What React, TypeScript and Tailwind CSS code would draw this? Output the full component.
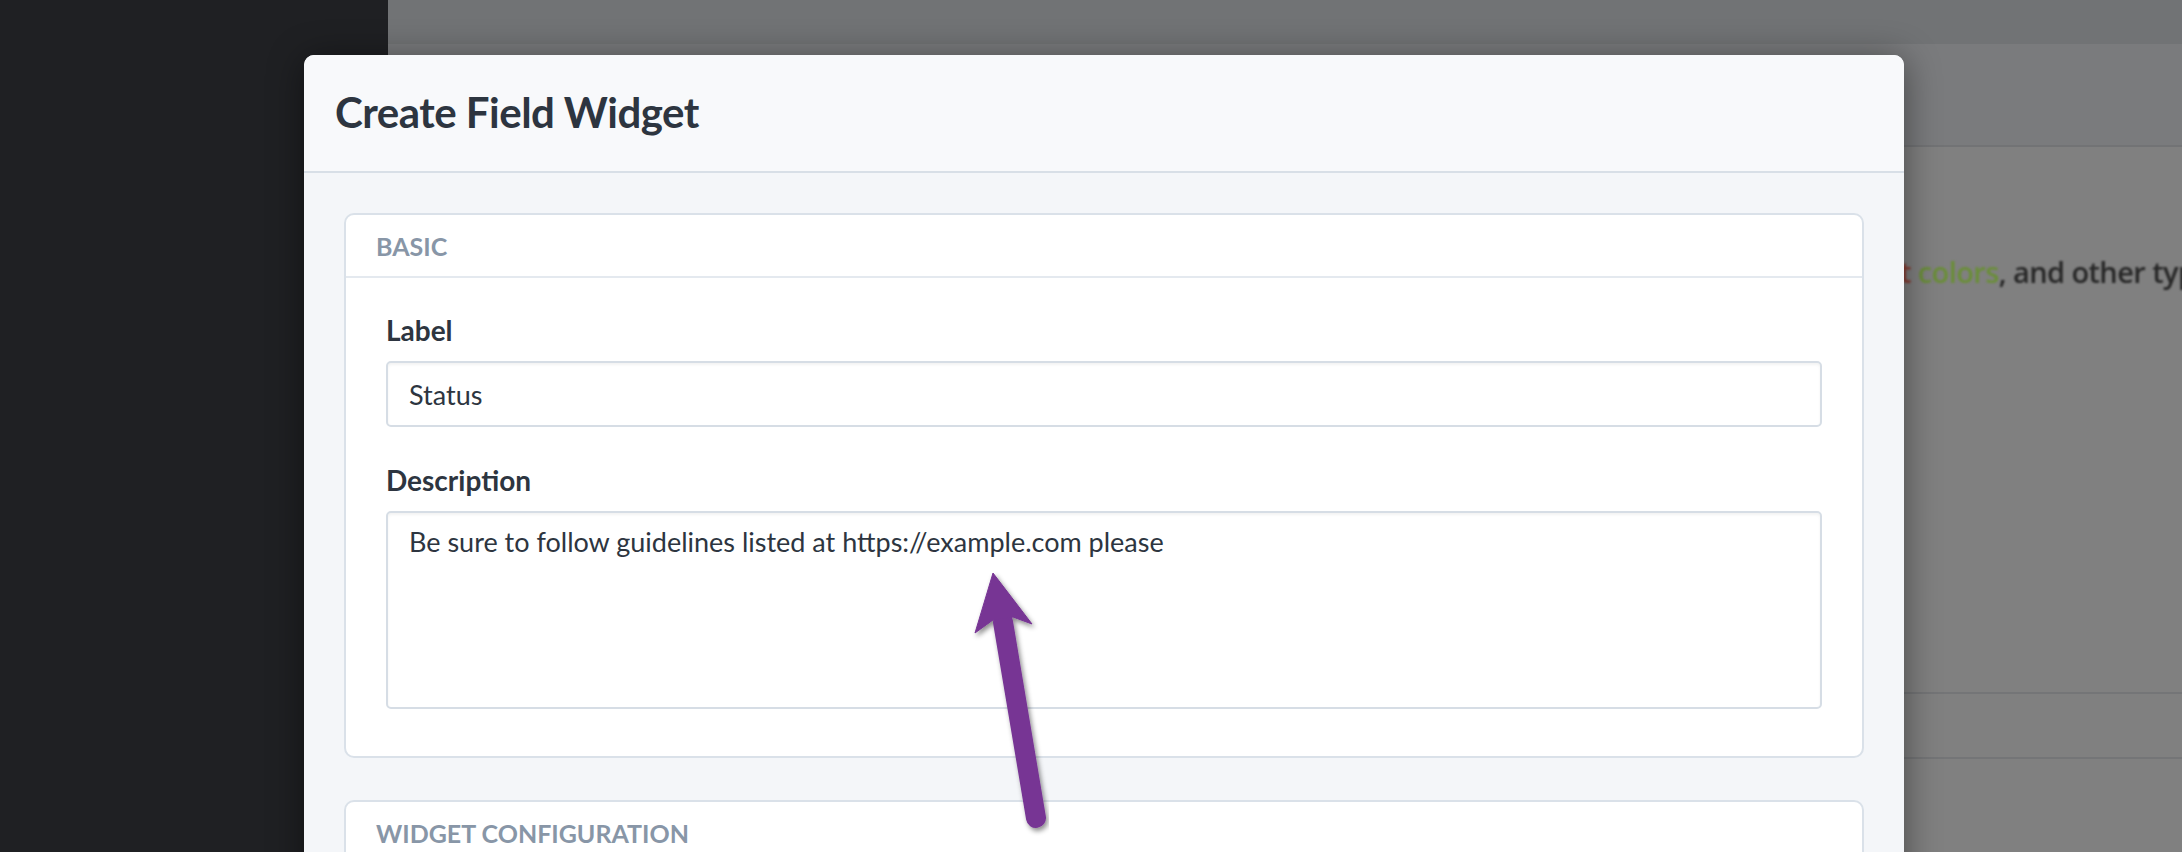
import React from 'react';

/* ---------------- 背景页面（被遮罩压暗） ---------------- */
function BackdropPage() {
  return (
    <div className="flex h-[852px] w-[2182px]">
      <aside className="w-[388px] shrink-0 bg-[#1f2023]" />
      <main className="flex flex-1 flex-col bg-[#808080]">
        <div className="h-[44px] bg-[#717375]" />
        <div className="h-[103px] border-b-2 border-[#727375] bg-[#7a7b7d]" />
        <div className="flex h-[545px] flex-col pt-[106px]">
          <p className="whitespace-nowrap pl-[1512px] font-['Open_Sans',sans-serif] text-[29px] font-semibold leading-[38px] tracking-[-0.6px] text-[#262626] blur-[0.8px]">
            <span className="text-[#8a3a30]">t</span> <span className="text-[#6a8e38]">colors</span>, and other types of formatting
          </p>
        </div>
        <div className="h-[65px] border-t-2 border-[#747577]" />
        <div className="border-t-2 border-[#747577]" />
      </main>
    </div>
  );
}

function Field({ label, children }: { label: string; children: React.ReactNode }) {
  return (
    <div className="flex flex-col">
      <label className="mb-[13px] text-[28px] font-bold leading-[36px] text-[#2d3540]">{label}</label>
      {children}
    </div>
  );
}

function Card({ title, children }: { title: string; children?: React.ReactNode }) {
  return (
    <section className="rounded-[10px] border-2 border-[#dae1e9] bg-white">
      <div className="flex h-[63px] items-center border-b-2 border-[#e4e9ef] pl-[30px] pt-[2px]">
        <h2 className="text-[25px] font-bold uppercase leading-none text-[#8896a7]">{title}</h2>
      </div>
      {children}
    </section>
  );
}

/* ---------------- 弹窗 ---------------- */
function CreateFieldModal() {
  return (
    <div className="absolute left-[304px] top-[55px] h-[830px] w-[1600px] overflow-hidden rounded-t-[10px] bg-[#f4f6f9] shadow-[0_4px_36px_rgba(0,0,0,0.45)]">
      <div className="flex h-[118px] items-center border-b-2 border-[#d8dfe7] bg-[#f8f9fb] pb-[3px] pl-[31px]">
        <h1 className="text-[42px] font-bold leading-none tracking-[-0.5px] text-[#2d3540]">Create Field Widget</h1>
      </div>
      <div className="flex flex-col gap-[42px] px-10 pt-10">
        <Card title="Basic">
          <div className="flex flex-col gap-[35px] px-10 pb-[47px] pt-[34px]">
            <Field label="Label">
              <input
                readOnly
                value="Status"
                className="h-[66px] rounded-[5px] border-2 border-[#d6dde5] bg-white pl-[21px] text-[27px] text-[#2d3540] shadow-[inset_0_2px_3px_rgba(0,0,0,0.05)] outline-none"
              />
            </Field>
            <Field label="Description">
              <textarea
                readOnly
                value="Be sure to follow guidelines listed at https://example.com please"
                className="h-[198px] resize-none rounded-[5px] border-2 border-[#d6dde5] bg-white px-[21px] pb-3 pt-[11px] text-[27px] leading-[36px] text-[#2d3540] shadow-[inset_0_2px_3px_rgba(0,0,0,0.05)] outline-none"
              />
            </Field>
          </div>
        </Card>
        <Card title="Widget Configuration" />
      </div>
    </div>
  );
}

/* ---------------- 标注箭头 ---------------- */
function AnnotationArrow() {
  return (
    <svg
      className="pointer-events-none absolute left-0 top-0"
      width="2182"
      height="852"
      viewBox="0 0 2182 852"
    >
      <defs>
        <filter id="arrowShadow" x="-20%" y="-20%" width="140%" height="140%">
          <feDropShadow dx="2" dy="3" stdDeviation="2.5" floodColor="#000" floodOpacity="0.45" />
        </filter>
      </defs>
      <g filter="url(#arrowShadow)" fill="#773594" stroke="#773594">
        <line x1="1003" y1="622" x2="1036" y2="818" strokeWidth="20" strokeLinecap="round" />
        <polygon points="993,573 1032,624 1013,617 993,620 975,633" strokeWidth="1" strokeLinejoin="round" />
      </g>
    </svg>
  );
}

export default function App() {
  return (
    <div className="relative h-[852px] w-[2182px] overflow-hidden font-['Lato',sans-serif]">
      <BackdropPage />
      <CreateFieldModal />
      <AnnotationArrow />
    </div>
  );
}
